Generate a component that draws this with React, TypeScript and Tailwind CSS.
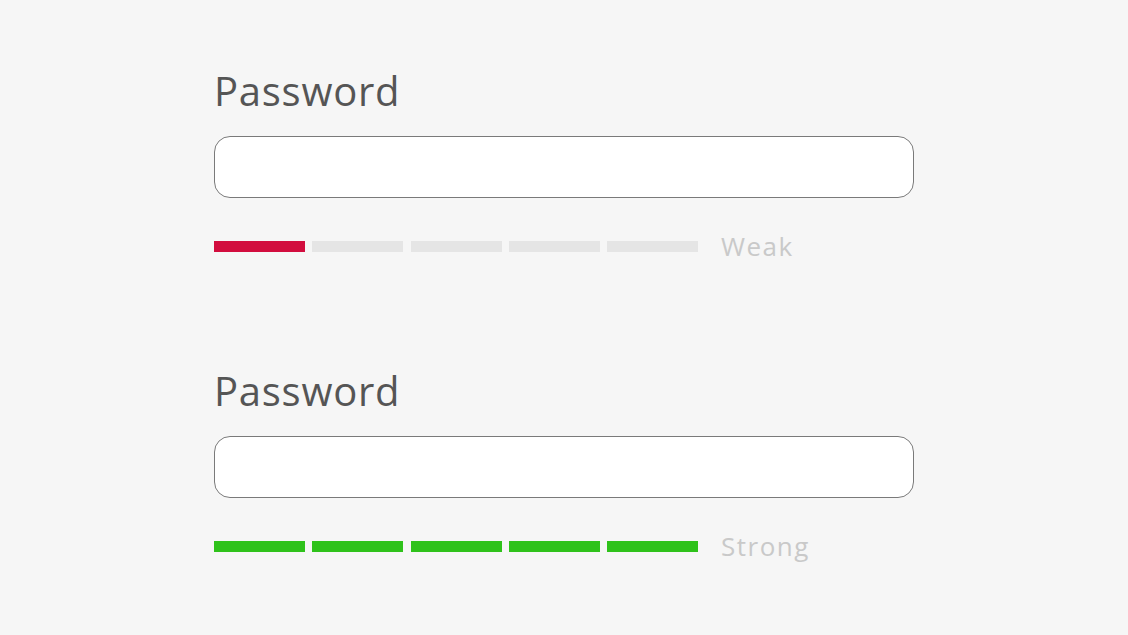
const fields = [
  { filled: 1, color: "bg-[#d20d3e]", label: "Weak" },
  { filled: 5, color: "bg-[#2fc21b]", label: "Strong" },
];

function StrengthField({ filled, color, label }: { filled: number; color: string; label: string }) {
  return (
    <div className="flex flex-col">
      <label className="text-[40px] leading-[46px] text-[#555555] tracking-[0.75px]">Password</label>
      <input
        type="password"
        className="mt-[22px] h-[62px] w-[700px] rounded-[16px] border border-[#7a7a7a] bg-white px-4 outline-none"
      />
      <div className="mt-[35px] flex items-center">
        <div className="flex gap-[7.25px]">
          {[0, 1, 2, 3, 4].map((i) => (
            <div key={i} className={`h-[11px] w-[91px] ${i < filled ? color : "bg-[#e5e5e5]"}`} />
          ))}
        </div>
        <span className="ml-[23px] text-[26px] leading-none tracking-[1.5px] text-[#c9c9c9]">{label}</span>
      </div>
    </div>
  );
}

export default function App() {
  return (
    <div className="min-h-[635px] w-full bg-[#f6f6f6] pl-[214px] pt-[68px] font-['Open_Sans',sans-serif]">
      <div className="flex flex-col gap-[109px]">
        {fields.map((f, i) => (
          <StrengthField key={i} {...f} />
        ))}
      </div>
    </div>
  );
}
